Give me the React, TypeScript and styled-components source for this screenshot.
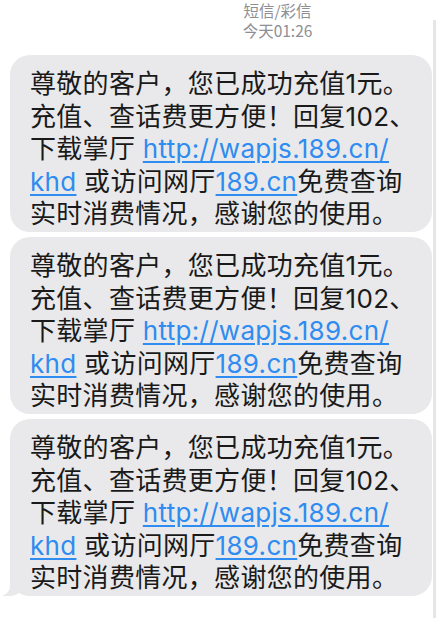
import styled, { createGlobalStyle } from 'styled-components';

const GlobalStyle = createGlobalStyle`
  html, body {
    margin: 0;
    padding: 0;
    background: #fff;
  }
  body {
    font-family: Inter, "Noto Sans CJK SC", sans-serif;
  }
`;

const lines = [
  '尊敬的客户，您已成功充值1元。',
  '充值、查话费更方便！回复102、',
];

function MessageBody() {
  return (
    <Text>
      {lines.map(l => (
        <Line key={l}>{l}</Line>
      ))}
      <Line>
        下载掌厅 <Link>http://wapjs.189.cn/</Link>
      </Line>
      <Line>
        <Link>khd</Link> 或访问网厅<Link>189.cn</Link>免费查询
      </Line>
      <Line>实时消费情况，感谢您的使用。</Line>
    </Text>
  );
}

export default function App() {
  return (
    <>
      <GlobalStyle />
      <Screen>
        <Thread>
          <Header>
            <HeaderLine>短信/彩信</HeaderLine>
            <HeaderLine>今天01:26</HeaderLine>
          </Header>
          <Bubbles>
            <Bubble>
              <MessageBody />
            </Bubble>
            <Bubble>
              <MessageBody />
            </Bubble>
            <Bubble tail>
              <MessageBody />
            </Bubble>
          </Bubbles>
        </Thread>
        <Edge />
      </Screen>
    </>
  );
}

const Screen = styled.div`
  display: flex;
  flex-direction: row;
  width: 436px;
  height: 618px;
  overflow: hidden;
  background: #fff;
`;

const Thread = styled.div`
  flex: 1;
  display: flex;
  flex-direction: column;
`;

const Edge = styled.div`
  width: 3px;
  margin-top: 20px;
  background: #e6e6e8;
`;

const Header = styled.div`
  display: flex;
  flex-direction: column;
  align-items: center;
  gap: 1px;
  padding: 1px 0 0 122px;
  height: 55px;
  box-sizing: border-box;
`;

const HeaderLine = styled.div`
  font-family: "Noto Sans CJK SC", sans-serif;
  font-size: 15.5px;
  line-height: 19px;
  color: #8e8e93;
`;

const Bubbles = styled.div`
  display: flex;
  flex-direction: column;
  gap: 5px;
  padding: 0 1px 0 10px;
`;

const Bubble = styled.div<{ tail?: boolean }>`
  position: relative;
  background: #e9e9eb;
  border-radius: 20px;
  padding: 13px 8px 1px 20px;

  ${({ tail }) =>
    tail &&
    `
    &::before {
      content: '';
      position: absolute;
      left: -7px;
      bottom: 0;
      width: 22px;
      height: 20px;
      background: #e9e9eb;
      border-bottom-right-radius: 16px 14px;
    }
    &::after {
      content: '';
      position: absolute;
      left: -14px;
      bottom: 0;
      width: 14px;
      height: 22px;
      background: #fff;
      border-bottom-right-radius: 10px;
    }
  `}
`;

const Text = styled.div`
  position: relative;
  z-index: 1;
  display: flex;
  flex-direction: column;
  font-family: Inter, "Noto Sans CJK SC", sans-serif;
  font-size: 26px;
  line-height: 32.6px;
  letter-spacing: 0.3px;
  color: #1a1a1a;
`;

const Line = styled.div`
  white-space: nowrap;
`;

const Link = styled.span`
  color: #2f8cf0;
  text-decoration: underline;
  text-decoration-thickness: 1.5px;
  text-underline-offset: 3px;
`;
